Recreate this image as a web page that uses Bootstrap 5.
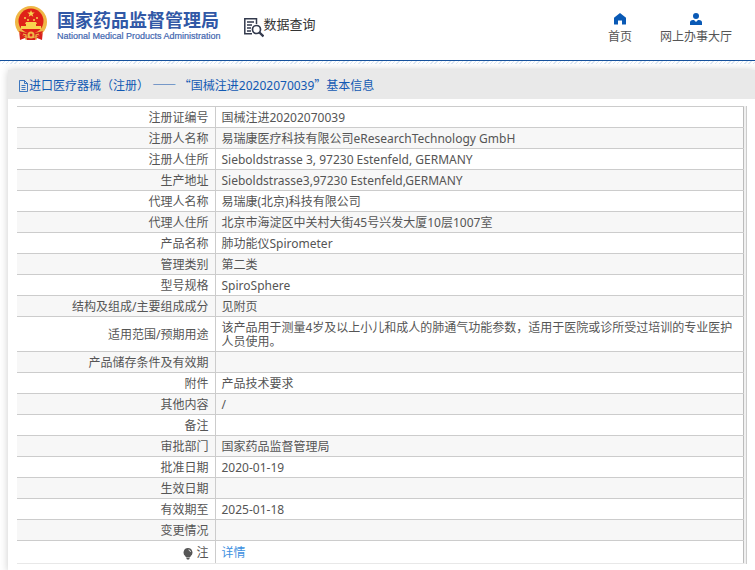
<!DOCTYPE html>
<html lang="zh-CN">
<head>
<meta charset="utf-8">
<meta name="viewport" content="width=device-width, initial-scale=1">
<title>国家药品监督管理局 数据查询</title>
<link href="https://cdn.jsdelivr.net/npm/bootstrap@5.3.0/dist/css/bootstrap.min.css" rel="stylesheet">
<style>
body{font-family:"Noto Sans","Noto Sans CJK SC",sans-serif;font-size:12px;line-height:14px;color:#555;background:#fff;overflow:hidden}
a{text-decoration:none}
.site-header{height:61px;border-bottom:1px solid #14509c;padding:5px 23px 0 14px}
.brand-text{margin-left:9px}
.brand-cn{font-size:18px;line-height:20px;margin-bottom:2px;font-weight:700;color:#3158a6;font-family:"Noto Sans CJK SC",sans-serif}
.brand-en{font-family:"Liberation Sans",Arial,sans-serif;font-size:9px;line-height:10px;color:#3f66b0;-webkit-text-stroke:.2px #3f66b0}
.section-name{font-size:13px;line-height:20px;color:#333;margin:9px 0 0 23px}
.top-link{color:#555;line-height:16px}
.header-shade{height:3px;background:repeating-linear-gradient(135deg,#dce8f5 0 1px,#fff 1px 3px)}
.detail-panel{margin:6px 0 0 8px;box-shadow:0 0 8px #ccc}
.panel-title{height:29px;background:#e9e9e9;color:#1259b3;font-size:12px;line-height:16px;padding:2px 0 0 10px}
.wide-mark{font-family:"Noto Sans CJK SC",sans-serif}
.panel-content{padding:7px 8px 8px 9px}
.table-frame{border-right:1px solid #ccc;padding-right:2px;background:#f0f0f0}
.info-table{width:100%;border-collapse:collapse;background:#fff;border-right:1px solid #bbb}
.info-table th,.info-table td{border-top:1px solid #ccc;padding:4px 6px 2px;height:21px;font-weight:400;vertical-align:middle}
.info-table th{width:198px;text-align:right;border-right:1px solid #ccc}
.info-table tr:nth-child(even){background:#f7f7f7}
.info-table tr:last-child>*{height:23px;border-bottom:1px solid #e8e8e8}
.info-table a{color:#3c8fe0}
</style>
<script src="https://cdn.jsdelivr.net/npm/bootstrap@5.3.0/dist/js/bootstrap.bundle.min.js"></script>
</head>
<body>
<header class="site-header d-flex align-items-start justify-content-between">
  <div class="d-flex align-items-start">
    <svg width="34" height="36" viewBox="0 0 34 36" aria-hidden="true">
      <path d="M5 25h24l-1 10-5-2-2 2h-8l-2-2-5 2z" fill="#d8201c"/>
      <circle cx="17" cy="17" r="16" fill="#efb746"/>
      <circle cx="17" cy="16" r="12.500" fill="#df2118"/>
      <path d="M17 5l1 2.500h2.700l-2.200 1.700.8 2.600-2.300-1.500-2.300 1.500.8-2.600-2.200-1.700H16z" fill="#f8d34f"/>
      <g fill="#f8d34f"><circle cx="11" cy="13" r="1"/><circle cx="14" cy="15" r="1"/><circle cx="20" cy="15" r="1"/><circle cx="23" cy="13" r="1"/><path d="M12 17h10l1 2h-1v2h5v3H7v-3h5v-2h-1z"/></g>
      <path d="M5 26q12 4 24 0l-2 4q-10 4-20 0z" fill="#d8201c"/>
      <path d="M9 29l3 1v5M25 29l-3 1v5" fill="none" stroke="#efb746" stroke-width="1.200"/>
      <circle cx="17" cy="30" r="3.500" fill="#efb746"/><circle cx="17" cy="30" r="1.500" fill="#df2118"/>
    </svg>
    <div class="brand-text pt-1">
      <div class="brand-cn">国家药品监督管理局</div>
      <div class="brand-en">National Medical Products Administration</div>
    </div>
    <div class="section-name d-flex">
      <svg class="mt-1" width="20" height="20" viewBox="0 0 20 20" fill="none" stroke="#333a4d" aria-hidden="true">
        <path d="M12.500 6V.8H.8v15H8M3 4h7M3 7h5M3 10h4M3 13h4" stroke-width="1.500"/>
        <circle cx="12.500" cy="11.500" r="4" stroke-width="1.700"/><path d="M15.500 14.500l4 4" stroke-width="2.400"/>
      </svg>
      <span>数据查询</span>
    </div>
  </div>
  <nav class="d-flex pt-1">
    <a href="#" class="top-link d-flex flex-column align-items-center me-4 pe-1">
      <svg class="my-1" width="12" height="12" viewBox="0 0 12 12" aria-hidden="true"><path d="M6 0l6 4.800V11q0 .5-.5.500H8V7.500H4v4H.5Q0 11.500 0 11V4.800z" fill="#0959b5"/></svg>
      <span>首页</span></a>
    <a href="#" class="top-link d-flex flex-column align-items-center">
      <svg class="my-1" width="12" height="12" viewBox="0 0 12 12" aria-hidden="true"><circle cx="6" cy="3" r="3" fill="#0959b5"/><path d="M0 12V9.500Q0 7 3 7h1l2 2 2-2h1q3 0 3 2.500V12z" fill="#0959b5"/></svg>
      <span>网上办事大厅</span></a>
  </nav>
</header>
<div class="header-shade"></div>
<main class="detail-panel">
  <h1 class="panel-title d-flex align-items-center m-0 fw-normal">
    <svg width="11" height="12" viewBox="0 0 11 12" fill="none" stroke="#1259b3" stroke-width=".8" aria-hidden="true"><path d="M1.500.5h5l3 3v8h-8zM6.500.5v3h3M3.500 5.500h4M3.500 7.500h4M3.500 9.500h4"/></svg>
    <span>进口医疗器械（注册） <span class="wide-mark">—— “</span>国械注进20202070039<span class="wide-mark">”</span>基本信息</span>
  </h1>
  <div class="panel-content">
    <div class="table-frame">
    <table class="info-table"><tbody>
      <tr><th scope="row">注册证编号</th><td>国械注进20202070039</td></tr>
      <tr><th scope="row">注册人名称</th><td>易瑞康医疗科技有限公司eResearchTechnology GmbH</td></tr>
      <tr><th scope="row">注册人住所</th><td>Sieboldstrasse 3, 97230 Estenfeld, GERMANY</td></tr>
      <tr><th scope="row">生产地址</th><td>Sieboldstrasse3,97230 Estenfeld,GERMANY</td></tr>
      <tr><th scope="row">代理人名称</th><td>易瑞康(北京)科技有限公司</td></tr>
      <tr><th scope="row">代理人住所</th><td>北京市海淀区中关村大街45号兴发大厦10层1007室</td></tr>
      <tr><th scope="row">产品名称</th><td>肺功能仪Spirometer</td></tr>
      <tr><th scope="row">管理类别</th><td>第二类</td></tr>
      <tr><th scope="row">型号规格</th><td>SpiroSphere</td></tr>
      <tr><th scope="row">结构及组成/主要组成成分</th><td>见附页</td></tr>
      <tr><th scope="row">适用范围/预期用途</th><td>该产品用于测量4岁及以上小儿和成人的肺通气功能参数，适用于医院或诊所受过培训的专业医护人员使用。</td></tr>
      <tr><th scope="row">产品储存条件及有效期</th><td></td></tr>
      <tr><th scope="row">附件</th><td>产品技术要求</td></tr>
      <tr><th scope="row">其他内容</th><td>/</td></tr>
      <tr><th scope="row">备注</th><td></td></tr>
      <tr><th scope="row">审批部门</th><td>国家药品监督管理局</td></tr>
      <tr><th scope="row">批准日期</th><td>2020-01-19</td></tr>
      <tr><th scope="row">生效日期</th><td></td></tr>
      <tr><th scope="row">有效期至</th><td>2025-01-18</td></tr>
      <tr><th scope="row">变更情况</th><td></td></tr>
      <tr><th scope="row"><svg width="10" height="12" viewBox="0 0 10 12" aria-hidden="true"><path d="M5 0a4.500 4.500 0 0 1 2.500 8.200V9h-5v-.8A4.500 4.500 0 0 1 5 0zM3 9.500h4L6 11.500H4z" fill="#555"/><path d="M5.500 1.800q2 .3 2 2.200" fill="none" stroke="#fff" stroke-width=".8"/></svg> 注</th><td><a href="#">详情</a></td></tr>
    </tbody></table>
    </div>
  </div>
</main>
</body>
</html>
